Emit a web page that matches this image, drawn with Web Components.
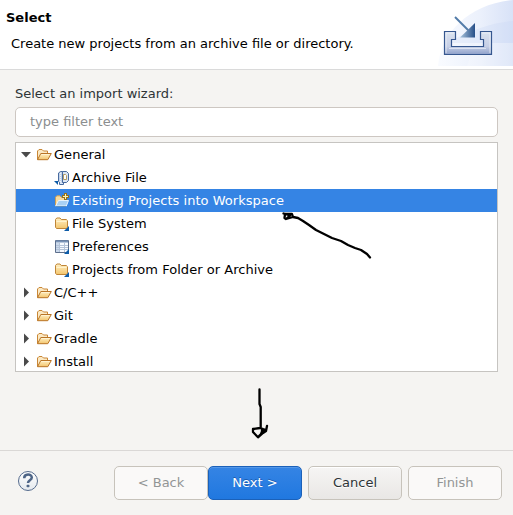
<!DOCTYPE html>
<html lang="en">
<head>
<meta charset="utf-8">
<title>Import</title>
<style>
html,body{margin:0;height:100%;overflow:hidden}
body{font:13px/23px "DejaVu Sans",sans-serif;color:#000;background:#f5f4f2}
</style>
</head>
<body>
<import-wizard></import-wizard>
<script>
const define = (name, render) => customElements.define(name, class extends HTMLElement {
  connectedCallback() {
    if (!this.shadowRoot) this.attachShadow({mode: 'open'}).innerHTML = render(this);
  }
});

const icons = {
  open: `<path d="M1.5 12.5V4L3 2.5H6L7.5 4H11.5V6.5" fill="#fbe9c4" stroke="#c98736"/><path d="M1.5 12.7L4.8 6.5H15.3L11.8 12.7Z" fill="url(#g)" stroke="#b97426" stroke-linejoin="round"/><path d="M5.4 7.5H13.6" stroke="#fff3d2"/>`,
  folder: `<path d="M1.5 11.2V3.5L2.8 2H6L7.3 3.5H12.3L13.5 4.7V11.2L12.5 12.5H2.5Z" fill="url(#g)" stroke="#bf8537"/><path d="M2.5 5.5H12.5" stroke="#fff2cc"/><path d="M15 10V15H10Z" fill="#0d5ca8"/>`,
  archive: `<path d="M4.5 3L6.500 1.500H8.500V13.500H6.500L4.500 11.500Z" fill="#c3d3ea" stroke="#486b9f"/><path d="M5.500 12.500V14.500H9.500V12.500" fill="#dce8f8" stroke="#486b9f"/><path d="M6.500 3V12" stroke="#f1f6fd" stroke-dasharray="1 1"/><path d="M8.500 1.500H12.500L14.500 3.500V10.500L12.500 12.500H8.500Z" fill="#dbe5f2" stroke="#486b9f"/><path d="M9.500 4.500H11.500L12.500 5.500V9.500H9.500Z" fill="#fff" stroke="#b39c66"/><path d="M0 11H4V15Z" fill="#0d5ca8"/>`,
  existing: `<path d="M1.5 12.5V4.2L2.8 2.8H6L7.3 4.3H11.5V7" fill="#f7dba0" stroke="#cf9f52"/><path d="M1.7 13L4.5 7.5H14.5L12.3 13Z" fill="#a9d1f5" stroke="#eaf4fd"/><path d="M2 13.5H12" stroke="#5f8fbe"/><path d="M11.5 0V7M8 3.5H15" stroke="#94711c" stroke-width="3"/><path d="M11.5 1V6M9 3.5H14" stroke="#fff5b4"/>`,
  prefs: `<path d="M1.5 1.5H14.5V13.5H1.5Z" fill="#f8fbff" stroke="#5d6f8c"/><path d="M2 2.5H14" stroke="#7892b6" stroke-width="2"/><path d="M2 4H5V13H2Z" fill="#cbd9eb"/><path d="M5.5 4V13M10.5 4V13M2 6.5H14M2 8.5H14M2 10.5H14" stroke="#b4c3d8"/><path d="M15 10V15H10Z" fill="#0d5ca8"/>`
};

define('tree-icon', el => `<style>:host{display:block;width:16px;height:16px;flex:none;white-space:normal}svg{display:block}</style><svg width="16" height="16" viewBox="0 0 16 16" fill="none"><defs><linearGradient id="g" x2="0" y2="1"><stop stop-color="#fff0c4"/><stop offset="1" stop-color="#f3c56d"/></linearGradient></defs>${icons[el.getAttribute('name')]}</svg>`);

define('tree-row', el => {
  const s = el.getAttribute('state');
  const arrow = s === 'open' ? '<path d="M0 3H10L5 8.5Z"/>' : s === 'closed' ? '<path d="M3 0.5L8 5.5L3 10.5Z"/>' : '';
  return `<style>:host{display:flex;align-items:center;height:23px;padding-left:5px;white-space:nowrap;letter-spacing:.03px}
:host([child]){padding-left:23px}:host([selected]){background:#3584e4;color:#fff}
.arrow{width:10px;height:11px;margin-right:5px;fill:#4a4a4a;flex:none}tree-icon{margin-right:2px}</style>
<svg class="arrow" viewBox="0 0 10 11">${arrow}</svg><tree-icon name="${el.getAttribute('icon')}"></tree-icon><slot></slot>`;
});

define('wizard-header', () => `<style>:host{display:flex;justify-content:space-between;height:69px;background:#fff;border-bottom:1px solid #dadada}
.text{padding:6px 0 0 6px}h1{font-size:13px;line-height:23px;margin:0}p{margin:3px 0 0 5px;white-space:nowrap}svg{display:block;flex:none}</style>
<div class="text"><h1><slot name="title"></slot></h1><p><slot></slot></p></div>
<svg width="76" height="66" viewBox="0 0 76 66"><defs>
<linearGradient id="a"><stop stop-color="#f9fbff"/><stop offset=".55" stop-color="#ecf1fc"/><stop offset="1" stop-color="#d8e2f7"/></linearGradient>
<linearGradient id="b" x2="0" y2="1"><stop stop-color="#dbe3f0"/><stop offset=".65" stop-color="#c6cfe6"/><stop offset="1" stop-color="#8d9fc9"/></linearGradient>
<linearGradient id="c"><stop stop-color="#a9c4dc"/><stop offset="1" stop-color="#274f88"/></linearGradient></defs>
<path d="M1 66C4 32 33 4 76 0V66Z" fill="url(#a)"/><path d="M10 43C32 31 53 23 76 21V43Z" fill="#c5d5f3" opacity=".25"/><path d="M38 43H76V66H30Z" fill="#fff" opacity=".2"/>
<path d="M7.5 31.5H18.5V39.5H14.5V46.5H46.500V39.5H43.500V31.5H54.5V54.5H7.5Z" fill="url(#b)" stroke="#36578f" stroke-width="1.2"/>
<path d="M9 53V33H17M45 33H53V53" fill="none" stroke="#edf1f8" opacity=".8"/><path d="M12 48.500H49" stroke="#eef2fa" opacity=".7"/>
<path d="M18 17L32 31" stroke="#527ba9" stroke-width="2"/><path d="M38 23V37.500H23Z" fill="url(#c)"/></svg>`);

define('filter-field', () => `<style>:host{display:block;box-sizing:border-box;height:30px;border:1px solid #cdc7c2;border-radius:5px;background:#fff;color:#8b8e8f;padding:2px 14px}</style><slot></slot>`);

define('wizard-tree', () => `<style>:host{display:block;box-sizing:border-box;height:230px;border:1px solid #c6c4c1;background:#fff;overflow:hidden}</style><slot></slot>`);

define('wizard-button', () => `<style>:host{display:flex;box-sizing:border-box;width:94px;height:34px;border:1px solid #c7c3bb;border-radius:5px;align-items:center;justify-content:center;background:linear-gradient(#f6f5f4,#e9e7e5);color:#2e3436;white-space:pre;padding-bottom:1px;box-shadow:inset 0 1px #fff;text-shadow:0 1px #fff}
:host([disabled]){background:#faf9f8;color:#929595;box-shadow:none;text-shadow:none}
:host([primary]){background:linear-gradient(#3584e4,#2078e0);border-color:#1b61b9;color:#fff;box-shadow:inset 0 1px #5497e8;text-shadow:0 -1px #1b5cb0}</style><slot></slot>`);

define('wizard-footer', () => `<style>:host{display:flex;align-items:flex-start;border-top:1px solid #dad8d6;padding:15px 11px 0 17px;height:49px}
.help{margin:4px 0 0;flex:none}.buttons{display:flex;margin-left:auto;gap:6px}.pair{display:flex}</style>
<svg class="help" width="22" height="22" viewBox="0 0 22 22"><defs><linearGradient id="h" x2="0" y2="1"><stop stop-color="#fff"/><stop offset="1" stop-color="#e4e8ed"/></linearGradient></defs><circle cx="11" cy="11" r="9.5" fill="url(#h)" stroke="#566c8e"/><path d="M7.2 8.2C7.2 3.5 14.8 3.5 14.8 7.6C14.8 10.4 11 10.2 11 13" fill="none" stroke="#4e6587" stroke-width="2.5"/><rect x="9.5" y="14.7" width="3" height="2.6" rx="1" fill="#4e6587"/></svg>
<div class="buttons"><div class="pair"><wizard-button disabled>&lt; Back</wizard-button><wizard-button primary>Next &gt;</wizard-button></div><wizard-button>Cancel</wizard-button><wizard-button disabled>Finish</wizard-button></div>`);

define('pen-marks', () => `<style>:host{position:absolute;inset:0;pointer-events:none}svg{display:block}</style>
<svg width="513" height="515" fill="none" stroke="#000" stroke-width="2.3" stroke-linecap="round" stroke-linejoin="round">
<path d="M370 257.5L367 254L361 250L355 248L348 245L341 241L332 238L324 234L316 230L309 225L303 221L298 218L293 217L286 219L284.5 218L285 214L292 214L293 217M283.5 213.5L290 215.5L286 219"/>
<path d="M259.5 389.5V404L260.7 407V428M253 429L260 428L266 430M253 429L253 432L258 437.3L263 433L266 431L267 426M264 430L261 434L263 429M262 429L262 433L259 436"/></svg>`);

define('import-wizard', () => `<style>:host{display:flex;flex-direction:column;position:relative;width:513px;height:515px;overflow:hidden;background:#f5f4f2}
main{flex:1;padding:12px 15px 0}.label{color:#2e3436;height:25px}wizard-tree{margin-top:5px}</style>
<wizard-header><span slot="title">Select</span>Create new projects from an archive file or directory.</wizard-header>
<main><div class="label">Select an import wizard:</div><filter-field>type filter text</filter-field>
<wizard-tree><tree-row state="open" icon="open">General</tree-row><tree-row child icon="archive">Archive File</tree-row><tree-row child selected icon="existing">Existing Projects into Workspace</tree-row><tree-row child icon="folder">File System</tree-row><tree-row child icon="prefs">Preferences</tree-row><tree-row child icon="folder">Projects from Folder or Archive</tree-row><tree-row state="closed" icon="open">C/C++</tree-row><tree-row state="closed" icon="open">Git</tree-row><tree-row state="closed" icon="open">Gradle</tree-row><tree-row state="closed" icon="open">Install</tree-row></wizard-tree></main>
<wizard-footer></wizard-footer><pen-marks></pen-marks>`);
</script>
</body>
</html>
